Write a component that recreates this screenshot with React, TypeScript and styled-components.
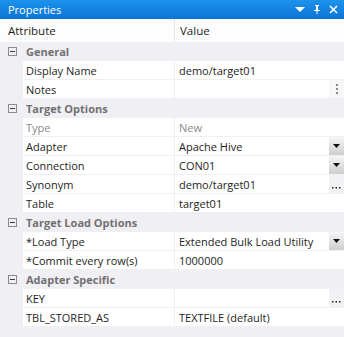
import React from "react";
import styled, { createGlobalStyle } from "styled-components";

const GlobalStyle = createGlobalStyle`
  html, body {
    margin: 0;
    padding: 0;
    background: #f0eff4;
  }
  body {
    font-family: "Open Sans", "Noto Sans", sans-serif;
    font-size: 11px;
    color: #1e1e1e;
  }
`;

const Panel = styled.div`
  width: 344px;
  height: 337px;
  background: #f0eff4;
  overflow: hidden;
  display: flex;
  flex-direction: column;
`;

const TitleBar = styled.div`
  height: 19px;
  background: linear-gradient(#1d93ec, #0b74d6);
  color: #ffffff;
  display: flex;
  align-items: center;
  padding: 0 6px 0 8px;
  font-size: 11px;
`;

const TitleText = styled.div`
  flex: 1;
`;

const TitleButtons = styled.div`
  display: flex;
  align-items: center;
  gap: 8px;
`;

const HeaderRow = styled.div`
  height: 23px;
  display: flex;
  align-items: center;
  background: #fcfdfc;
  font-size: 11.5px;
`;

const HeaderCell = styled.div<{ w?: number }>`
  ${(p) => (p.w ? `width: ${p.w}px;` : "flex: 1;")}
  height: 100%;
  display: flex;
  align-items: center;
  padding-left: ${(p) => (p.w ? 8 : 5)}px;
  box-sizing: border-box;
  border-right: ${(p) => (p.w ? "1px solid #e4e3e8" : "none")};
`;

const Row = styled.div`
  height: 19px;
  display: flex;
`;

const Gutter = styled.div`
  width: 23px;
  flex-shrink: 0;
  display: flex;
  align-items: center;
  justify-content: center;
`;

const Expander = styled.div`
  width: 7px;
  height: 7px;
  border: 1px solid #8b8b8b;
  position: relative;
  margin-left: 2px;
  &::after {
    content: "";
    position: absolute;
    left: 1px;
    right: 1px;
    top: 3px;
    height: 1px;
    background: #3c3c3c;
  }
`;

const GroupLabel = styled.div`
  flex: 1;
  display: flex;
  align-items: center;
  padding-left: 3px;
  font-weight: 700;
  color: #717171;
`;

const NameCell = styled.div<{ disabled?: boolean }>`
  width: 152px;
  flex-shrink: 0;
  box-sizing: border-box;
  background: #ffffff;
  border-right: 1px solid #f0eff4;
  border-bottom: 1px solid #f0eff4;
  padding-left: 3px;
  display: flex;
  align-items: center;
  color: ${(p) => (p.disabled ? "#8a8a8a" : "#1e1e1e")};
`;

const ValueCell = styled.div<{ disabled?: boolean }>`
  flex: 1;
  box-sizing: border-box;
  background: #ffffff;
  border-bottom: 1px solid #f0eff4;
  display: flex;
  align-items: center;
  color: ${(p) => (p.disabled ? "#8a8a8a" : "#1e1e1e")};
`;

const ValueText = styled.div`
  flex: 1;
  padding-left: 4px;
  white-space: nowrap;
  overflow: hidden;
`;

const DropButton = styled.div`
  width: 15px;
  height: 18px;
  flex-shrink: 0;
  background: linear-gradient(#f6f6f6, #cdcdcd);
  display: flex;
  align-items: center;
  justify-content: center;
`;

const SideButton = styled.div<{ bg: string }>`
  width: 15px;
  height: 18px;
  flex-shrink: 0;
  background: ${(p) => p.bg};
  display: flex;
  align-items: center;
  justify-content: center;
`;

type Button = "drop" | "ellipsis" | "dots";

type Item =
  | { group: string }
  | { name: string; value?: string; disabled?: boolean; button?: Button };

const items: Item[] = [
  { group: "General" },
  { name: "Display Name", value: "demo/target01" },
  { name: "Notes", button: "dots" },
  { group: "Target Options" },
  { name: "Type", value: "New", disabled: true },
  { name: "Adapter", value: "Apache Hive", button: "drop" },
  { name: "Connection", value: "CON01", button: "drop" },
  { name: "Synonym", value: "demo/target01", button: "ellipsis" },
  { name: "Table", value: "target01" },
  { group: "Target Load Options" },
  { name: "*Load Type", value: "Extended Bulk Load Utility", button: "drop" },
  { name: "*Commit every row(s)", value: "1000000" },
  { group: "Adapter Specific" },
  { name: "KEY", button: "ellipsis" },
  { name: "TBL_STORED_AS", value: "TEXTFILE (default)" },
];

function CellButton({ kind }: { kind: Button }) {
  if (kind === "drop") {
    return (
      <DropButton>
        <svg width="7" height="4" viewBox="0 0 7 4">
          <path d="M0 0h7L3.5 4z" fill="#111" />
        </svg>
      </DropButton>
    );
  }
  if (kind === "ellipsis") {
    return (
      <SideButton bg="#f2f2f4">
        <svg width="9" height="18" viewBox="0 0 9 18">
          <rect x="0" y="12" width="1.5" height="1.5" fill="#222" />
          <rect x="3.5" y="12" width="1.5" height="1.5" fill="#222" />
          <rect x="7" y="12" width="1.5" height="1.5" fill="#222" />
        </svg>
      </SideButton>
    );
  }
  return (
    <SideButton bg="#f7f7f8">
      <svg width="2" height="10" viewBox="0 0 2 10">
        <rect x="0" y="0" width="2" height="2" fill="#8a8a8a" />
        <rect x="0" y="4" width="2" height="2" fill="#8a8a8a" />
        <rect x="0" y="8" width="2" height="2" fill="#8a8a8a" />
      </svg>
    </SideButton>
  );
}

export default function App() {
  return (
    <Panel>
      <GlobalStyle />
      <TitleBar>
        <TitleText>Properties</TitleText>
        <TitleButtons>
          <svg width="10" height="5" viewBox="0 0 10 5">
            <path d="M0 0h10L5 5z" fill="#fff" />
          </svg>
          <svg width="8" height="9" viewBox="0 0 8 9">
            <path
              d="M2 0h4v1H5v4h2v1H4.5v3h-1V6H1V5h2V1H2z"
              fill="#fff"
            />
          </svg>
          <svg width="9" height="9" viewBox="0 0 9 9">
            <path d="M1 1l7 7M8 1L1 8" stroke="#fff" strokeWidth="1.6" />
          </svg>
        </TitleButtons>
      </TitleBar>
      <HeaderRow>
        <HeaderCell w={175}>Attribute</HeaderCell>
        <HeaderCell>Value</HeaderCell>
      </HeaderRow>
      {items.map((item, i) =>
        "group" in item ? (
          <Row key={i}>
            <Gutter>
              <Expander />
            </Gutter>
            <GroupLabel>{item.group}</GroupLabel>
          </Row>
        ) : (
          <Row key={i}>
            <Gutter />
            <NameCell disabled={item.disabled}>{item.name}</NameCell>
            <ValueCell disabled={item.disabled}>
              <ValueText>{item.value}</ValueText>
              {item.button && <CellButton kind={item.button} />}
            </ValueCell>
          </Row>
        )
      )}
    </Panel>
  );
}
